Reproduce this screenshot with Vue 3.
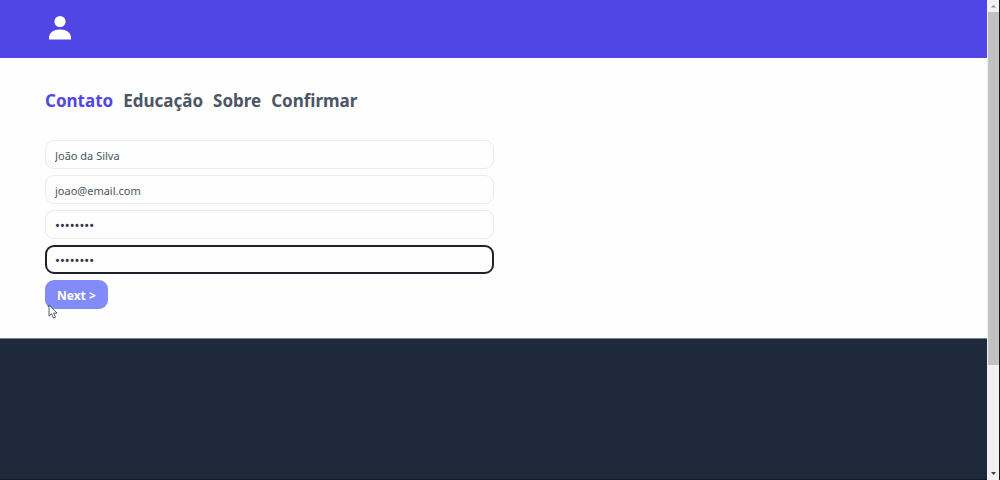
<script setup>
import { ref } from 'vue'

const steps = ['Contato', 'Educação', 'Sobre', 'Confirmar']
const current = ref('Contato')

const fields = ref([
  { id: 'name', type: 'text', label: 'Nome', value: 'João da Silva' },
  { id: 'email', type: 'email', label: 'E-mail', value: 'joao@email.com' },
  { id: 'password', type: 'password', label: 'Senha', value: 'password' },
  { id: 'confirm', type: 'password', label: 'Confirmar senha', value: 'password', active: true },
])
</script>

<template>
  <div class="window">
    <div class="page">
      <header class="topbar">
        <svg class="user" viewBox="0 0 24 26" aria-hidden="true">
          <circle cx="12" cy="6.5" r="5.6" />
          <path d="M1 24.6V22.9C1 17.8 5.6 14.6 12 14.6S23 17.8 23 22.9V24.6Z" />
        </svg>
      </header>

      <main class="content">
        <nav class="steps">
          <a
            v-for="step in steps"
            :key="step"
            href="#"
            :class="['step', { current: step === current }]"
            @click.prevent="current = step"
          >{{ step }}</a>
        </nav>

        <form class="form" @submit.prevent>
          <input
            v-for="field in fields"
            :id="field.id"
            :key="field.id"
            v-model="field.value"
            :type="field.type"
            :aria-label="field.label"
            :class="['field', { active: field.active }]"
          />
          <div class="actions">
            <button class="next" type="submit">Next &gt;</button>
            <svg class="cursor" viewBox="0 0 10 15" aria-hidden="true">
              <path d="M1 1V12.2L3.6 9.8L5.4 14L7.4 13.2L5.7 9.1H9.1Z" />
            </svg>
          </div>
        </form>
      </main>

      <footer class="footer"></footer>
    </div>

    <div class="scrollbar" aria-hidden="true">
      <svg class="arrow" viewBox="0 0 11 12"><path class="up" d="M3 7.5L5.5 5L8 7.5Z" /></svg>
      <div class="track"><div class="thumb"></div></div>
      <svg class="arrow" viewBox="0 0 11 12"><path class="down" d="M3 4L5.5 7L8 4Z" /></svg>
    </div>
  </div>
</template>

<style>
body {
  background: #1e293b;
}
</style>

<style scoped>
.window {
  display: flex;
  min-height: 100vh;
  font-family: "Noto Sans", "Open Sans", sans-serif;
}

.page {
  flex: 1;
  display: flex;
  flex-direction: column;
  min-width: 0;
  background: #fefefe;
}

.topbar {
  box-sizing: border-box;
  display: flex;
  align-items: center;
  height: 58px;
  padding: 0 48px 2px;
  background: #4f46e5;
}

.user {
  width: 24px;
  height: 26px;
  fill: #fff;
}

.content {
  padding: 29px 45px;
}

.steps {
  display: flex;
  gap: 10px;
  margin-bottom: 25px;
}

.step {
  color: #4b5563;
  font-size: 17px;
  font-weight: 700;
  line-height: 28px;
  text-decoration: none;
}

.step.current {
  color: #4f46e5;
}

.form {
  display: flex;
  flex-direction: column;
  gap: 6px;
  width: 50%;
}

.field {
  box-sizing: border-box;
  width: 100%;
  height: 29px;
  padding: 2px 9px 0;
  border: 1px solid #e9eaee;
  border-radius: 9px;
  outline: none;
  background: #fefefe;
  color: #4b5563;
  font-family: inherit;
  font-size: 11px;
}

.field[type="password"] {
  padding-top: 1px;
  color: #30334a;
  font-size: 13px;
}

.field.active {
  padding-right: 8px;
  padding-left: 8px;
  border: 2px solid #20222e;
}

.actions {
  position: relative;
  display: flex;
}

.next {
  height: 29px;
  padding: 2px 12px 0;
  border: 0;
  border-radius: 9px;
  background: #818cf8;
  color: #fff;
  font-family: inherit;
  font-size: 12px;
  font-weight: 700;
}

.cursor {
  position: absolute;
  left: 3px;
  top: 24px;
  width: 10px;
  height: 15px;
  fill: #fff;
  stroke: #30334a;
  stroke-width: 0.8;
}

.footer {
  flex: 1;
  border-top: 1px solid #7a8390;
  border-bottom: 1px solid #151a28;
  background: #1e293b;
}

.scrollbar {
  display: flex;
  flex-direction: column;
  width: 11px;
  padding-left: 1px;
  border-right: 1px solid #18181c;
  background: #f1f1f1;
}

.arrow {
  width: 11px;
  height: 12px;
}

.up {
  fill: #8b8b8b;
}

.down {
  fill: #404040;
}

.track {
  flex: 1;
}

.thumb {
  height: 77.4%;
  background: #c1c1c1;
}
</style>
